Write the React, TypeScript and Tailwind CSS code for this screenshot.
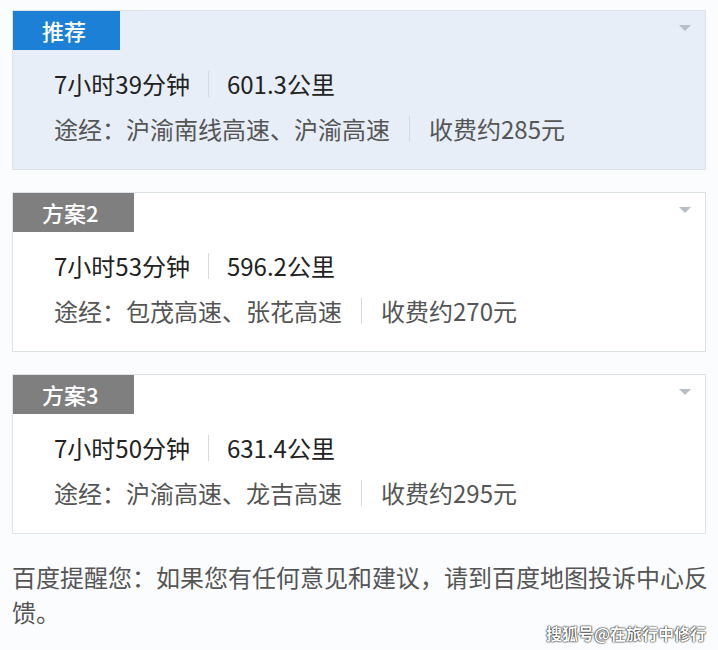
const routes = [
  {
    tag: '推荐',
    active: true,
    time: '7小时39分钟',
    dist: '601.3公里',
    via: '沪渝南线高速、沪渝高速',
    fee: '收费约285元',
  },
  {
    tag: '方案2',
    active: false,
    time: '7小时53分钟',
    dist: '596.2公里',
    via: '包茂高速、张花高速',
    fee: '收费约270元',
  },
  {
    tag: '方案3',
    active: false,
    time: '7小时50分钟',
    dist: '631.4公里',
    via: '沪渝高速、龙吉高速',
    fee: '收费约295元',
  },
];

function RouteCard({ route }: { route: (typeof routes)[number] }) {
  return (
    <div
      className={`relative h-[160px] border border-[#dde1e8] ${
        route.active ? 'bg-[#e8eef8]' : 'bg-white'
      }`}
    >
      <div
        className={`flex h-[39px] items-center pl-[29px] text-[22px] font-medium text-white ${
          route.active ? 'w-[107px] bg-[#1b80d6]' : 'w-[121px] bg-[#7f7f7f]'
        }`}
      >
        {route.tag}
      </div>
      {/* collapse arrow */}
      <svg
        className="absolute right-[14px] top-[14px]"
        width="12"
        height="7"
        viewBox="0 0 12 7"
      >
        <path d="M0 0 L12 0 L6 6 Z" fill="#b9bdc4" />
      </svg>
      <div className="mt-[11px] pl-[41px]">
        <div className="flex h-[45px] items-center text-[24px] text-[#222]">
          <span>{route.time}</span>
          <span className="mx-[18px] h-[26px] w-px bg-[#d6d9de]" />
          <span>{route.dist}</span>
        </div>
        <div className="flex h-[45px] items-center text-[24px] text-[#555]">
          <span>途经：{route.via}</span>
          <span className="mx-[19px] h-[26px] w-px bg-[#d6d9de]" />
          <span>{route.fee}</span>
        </div>
      </div>
    </div>
  );
}

export default function App() {
  return (
    <div
      className="relative h-[650px] w-[718px] overflow-hidden bg-[#fbfcfe] px-[12px] pt-[10px]"
      style={{ fontFamily: '"Noto Sans CJK SC", "Noto Sans", sans-serif' }}
    >
      <div className="flex flex-col gap-[22px]">
        {routes.map((r, i) => (
          <RouteCard key={i} route={r} />
        ))}
      </div>
      <p className="mt-[25px] -mr-[10px] text-[24px] leading-[35px] text-[#555]">
        百度提醒您：如果您有任何意见和建议，请到百度地图投诉中心反馈。
      </p>
      <div className="absolute bottom-[9px] right-[12px] text-[16px] font-bold leading-none text-white [text-shadow:0_0_2px_#000,0_0_1px_#000]">
        搜狐号@在旅行中修行
      </div>
    </div>
  );
}
